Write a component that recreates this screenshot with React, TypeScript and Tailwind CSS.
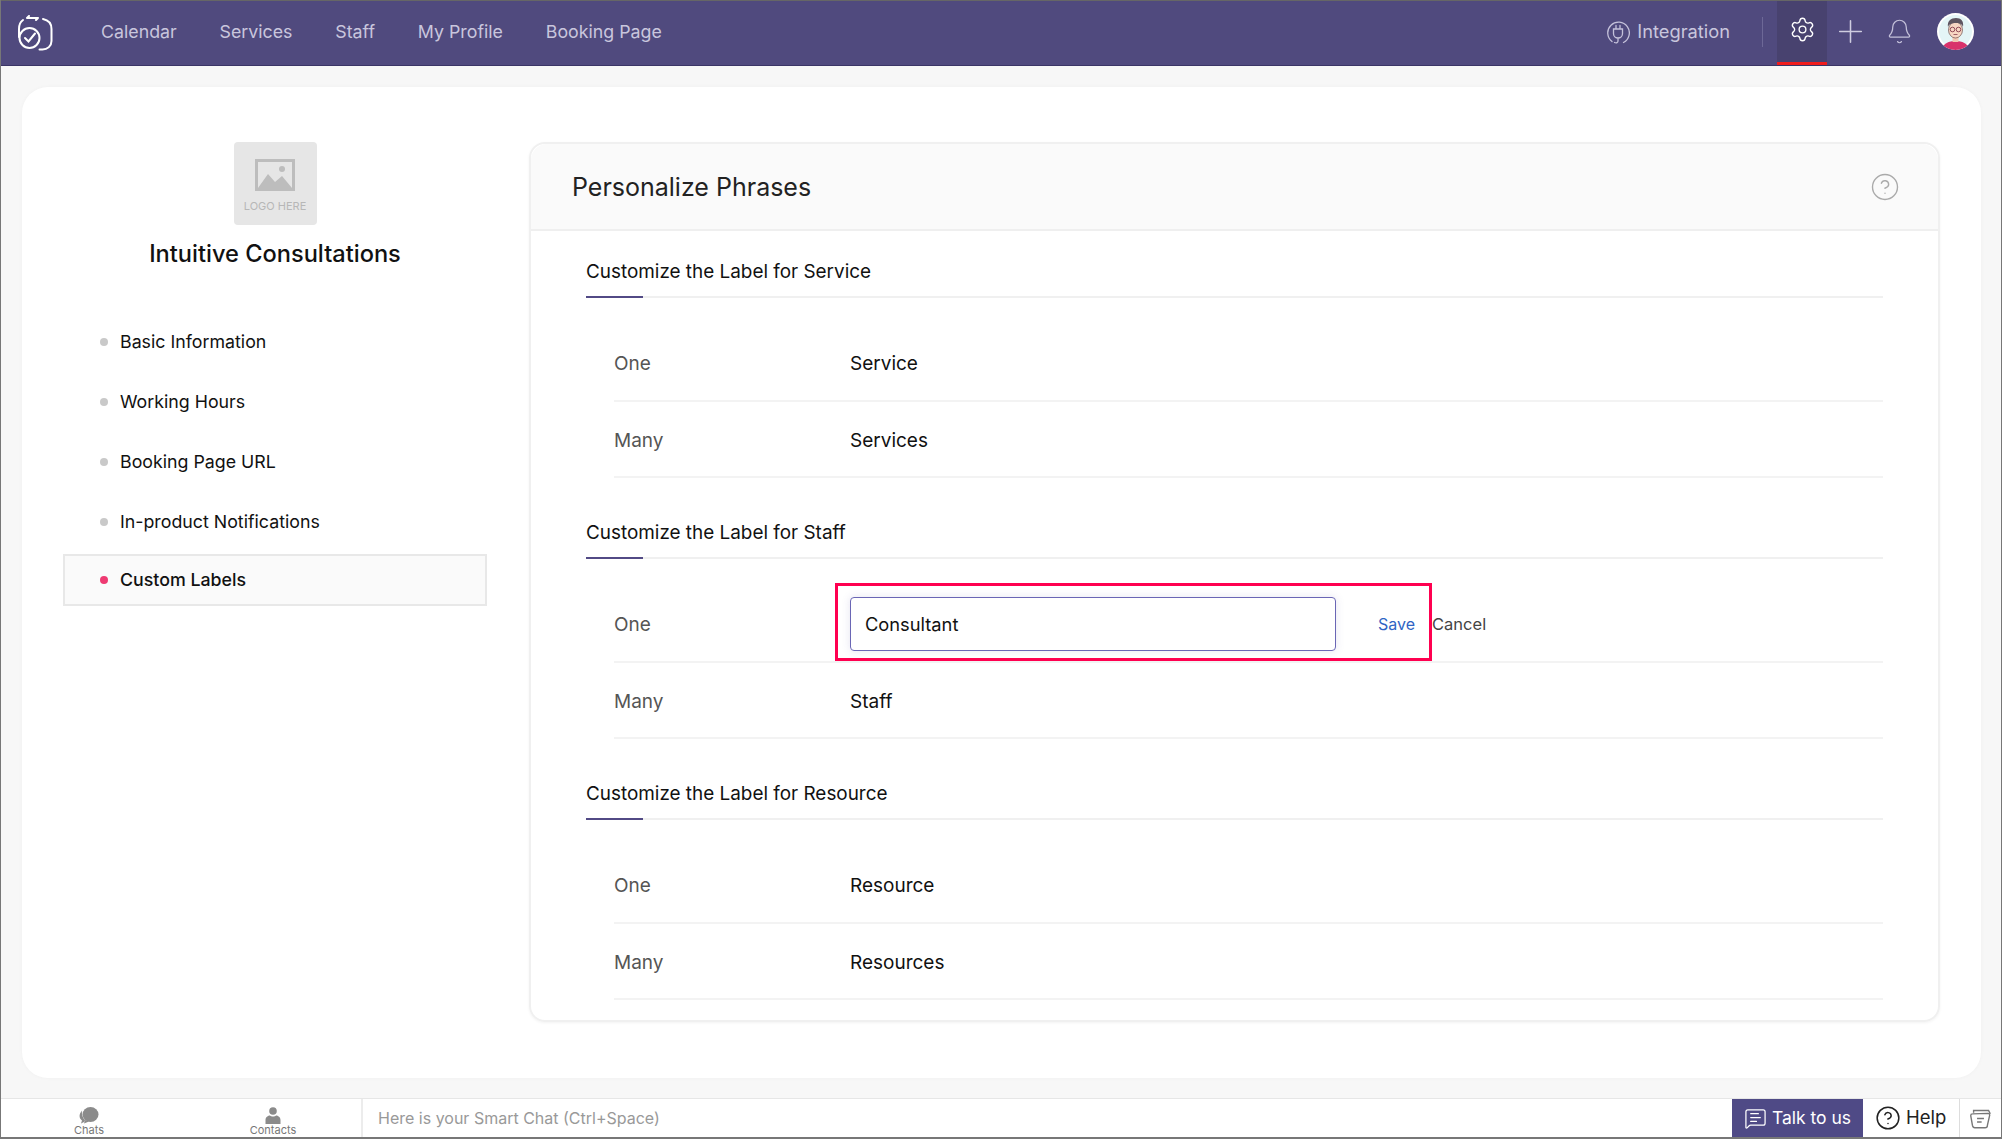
import { Bell, CircleHelp, MessageSquareText, Plus, Settings } from 'lucide-react';

const navItems = ['Calendar', 'Services', 'Staff', 'My Profile', 'Booking Page'];
const sideItems = ['Basic Information', 'Working Hours', 'Booking Page URL', 'In-product Notifications'];

function Logo() {
  return (
    <svg width="36" height="36" viewBox="0 0 36 36" fill="none" stroke="white" strokeWidth="2" strokeLinecap="round">
      <path d="M10 3h11M10 3l2-2M21 3l-2 2" />
      <path d="M6 5C3 7 2 10 2 14v8" />
      <circle cx="12.500" cy="23" r="10" />
      <path d="M8 23l3.500 3.500 6.500-8" />
      <path d="M26 4c5 1 8.500 4 8.500 10v12c0 5-4 8.500-9 8.500h-3" />
    </svg>
  );
}

function Plug() {
  return (
    <svg width="24" height="24" viewBox="0 0 24 24" fill="none" stroke="#c4c1da" strokeWidth="1.300" strokeLinecap="round" className="-mt-[1px]">
      <path d="M6 20.500A10.800 10.800 0 1 1 17.500 21.500" />
      <path d="M7.500 8v4.500a4.500 4.500 0 0 0 9 0V8zM10 4.500V8M14 4.500V8M12 17v3c0 1.500-1.500 2.500-3.500 1.500" />
    </svg>
  );
}

function Avatar() {
  return (
    <svg width="37" height="37" viewBox="0 0 37 37">
      <defs>
        <clipPath id="avatar-clip"><circle cx="18.500" cy="18.500" r="18.500" /></clipPath>
      </defs>
      <g clipPath="url(#avatar-clip)">
        <rect width="37" height="37" fill="white" />
        <circle cx="18.500" cy="18.500" r="16.500" fill="#e4f5f6" />
        <path d="M5 37c1-7 7-9 13.500-9s12.500 2 13.500 9z" fill="#d8326b" />
        <rect x="15.500" y="22" width="6" height="7" fill="#f2c9b4" />
        <ellipse cx="18.500" cy="17" rx="7" ry="8" fill="#f7d6c3" stroke="#5b3a3a" strokeWidth="0.600" />
        <path d="M11 14c-1-6 3-9 8-9s8 3 7 9c-1-3-3-4-7-4s-7 1-8 4z" fill="#5f5560" />
        <circle cx="15.500" cy="16.500" r="2.300" fill="none" stroke="#7a2b3d" strokeWidth="0.800" />
        <circle cx="21.500" cy="16.500" r="2.300" fill="none" stroke="#7a2b3d" strokeWidth="0.800" />
        <path d="M16.500 21.500h4" stroke="#7a2b3d" strokeWidth="0.700" />
      </g>
    </svg>
  );
}

function SectionHead({ title }: { title: string }) {
  return (
    <div className="flex h-[66px] flex-col justify-end border-b-2 border-[#f0f0f0]">
      <h3 className="mb-[12.500px] text-[18.900px] leading-6 text-[#111]">{title}</h3>
      <div className="-mb-[2px] h-[2px] w-[57px] bg-[#524a85]" />
    </div>
  );
}

function Row({ label, value }: { label: string; value: string }) {
  return (
    <div className="flex h-[76.500px] items-center border-b-2 border-[#f3f3f3] pt-[4px]">
      <span className="w-[236px] text-[19px] text-[#555]">{label}</span>
      <span className="text-[19px] text-[#111]">{value}</span>
    </div>
  );
}

export default function App() {
  return (
    <div className="relative flex h-[1139px] w-[2002px] flex-col overflow-hidden border-x border-[#777] bg-[#f7f7f7] font-['Inter','Liberation_Sans',sans-serif]">
      {/* top bar */}
      <header className="flex h-[66px] shrink-0 items-center border-y border-t-[#666] border-b-[#3b3566] bg-[#504a7e] pl-[16px] pr-[27px]">
        <Logo />
        <nav className="ml-[48px] -mt-[2px] flex gap-[42.800px] text-[17.800px] text-[#c9c6dd]">
          {navItems.map((item) => (
            <span key={item}>{item}</span>
          ))}
        </nav>
        <div className="ml-auto flex h-full items-center">
          <Plug />
          <span className="ml-[7px] -mt-[2px] text-[18.300px] text-[#c9c6dd]">Integration</span>
          <div className="ml-[32px] -mt-[2px] h-[30px] w-px bg-[#6d6897]" />
          <div className="ml-[14px] flex h-full w-[50px] items-center justify-center border-b-[3px] border-[#f01c1c] bg-[#48426f] pb-[4px]">
            <Settings size={27} strokeWidth={1.200} color="white" />
          </div>
          <Plus size={37} strokeWidth={1} color="#cfcde0" className="ml-[5px] -mt-[4px]" />
          <Bell size={27} strokeWidth={1.100} color="#c4c1da" className="ml-[17px] -mt-[4px]" />
          <div className="ml-[24px] -mt-[3px]">
            <Avatar />
          </div>
        </div>
      </header>

      {/* content */}
      <main className="flex-1 px-[21px] pt-[21px]">
        <div className="flex h-[991px] w-[1959px] rounded-[26px] bg-white pt-[55px] shadow-[0_0_4px_rgba(0,0,0,0.03)]">
          <aside className="ml-[41px] w-[424px]">
            <div className="flex flex-col items-center">
              <div className="flex h-[83px] w-[83px] flex-col items-center rounded-[4px] bg-[#e6e6e6] pt-[17px]">
                <svg width="40" height="32" viewBox="0 0 40 32">
                  <rect width="40" height="32" fill="#bdbdbd" />
                  <rect x="3" y="3" width="34" height="26" fill="#e6e6e6" />
                  <path d="M3 29l10-14 7 8 7-6 10 12z" fill="#bdbdbd" />
                  <circle cx="27" cy="10" r="3" fill="#bdbdbd" />
                </svg>
                <span className="mt-[9px] text-[11px] leading-3 whitespace-nowrap text-[#b7b7b7]">LOGO HERE</span>
              </div>
              <h2 className="mt-[13px] text-[23.600px] font-medium leading-8 text-[#111]">Intuitive Consultations</h2>
            </div>
            <ul className="mt-[42px] text-[17.800px] text-[#111]">
              {sideItems.map((item) => (
                <li key={item} className="flex h-[60px] items-center pl-[37px]">
                  <span className="mr-[12px] h-2 w-2 rounded-full bg-[#c9c9c9]" />
                  {item}
                </li>
              ))}
              <li className="mt-[1.500px] flex h-[52px] items-center border-2 border-[#e8e8e8] bg-[#fafafa] pl-[35px] pt-[1px] font-medium">
                <span className="mr-[12px] h-2 w-2 rounded-full bg-[#ee3a72]" />
                Custom Labels
              </li>
            </ul>
          </aside>

          <section className="ml-[42px] h-[880px] w-[1410.500px] rounded-[16px] border-2 border-[#f0f0f0] shadow-[0_1px_3px_rgba(0,0,0,0.05)]">
            <div className="flex h-[87px] items-center justify-between rounded-t-[16px] border-b-2 border-[#efefef] bg-[#fafafa] pl-[41px] pr-[38px]">
              <h1 className="text-[25px] leading-8 text-[#222]">Personalize Phrases</h1>
              <CircleHelp size={30} strokeWidth={1.100} color="#aaa" />
            </div>
            <div className="pl-[55px] pr-[55px]">
              <div className="h-[247px] pt-[1px]">
                <SectionHead title="Customize the Label for Service" />
                <div className="pl-[28px] pt-[27px]">
                  <Row label="One" value="Service" />
                  <Row label="Many" value="Services" />
                </div>
              </div>
              <div className="pt-[15px]">
                <SectionHead title="Customize the Label for Staff" />
                <div className="pl-[28px] pt-[27px]">
                  <div className="flex h-[76.500px] items-center border-b-2 border-[#f3f3f3] pt-[2px]">
                    <span className="w-[236px] pt-[2px] text-[19px] text-[#555]">One</span>
                    <input
                      readOnly
                      value="Consultant"
                      className="h-[54px] w-[486px] rounded-[4px] border border-[#6a66b5] pl-[14px] text-[18.300px] text-[#111] shadow-[0_0_8px_rgba(80,74,160,0.15)] outline-none"
                    />
                    <span className="ml-[42px] text-[16px] text-[#2f64c4]">Save</span>
                    <span className="ml-[17px] text-[16.500px] text-[#444]">Cancel</span>
                  </div>
                  <Row label="Many" value="Staff" />
                </div>
              </div>
              <div className="mt-[15px]">
                <SectionHead title="Customize the Label for Resource" />
                <div className="pl-[28px] pt-[27px]">
                  <Row label="One" value="Resource" />
                  <Row label="Many" value="Resources" />
                </div>
              </div>
            </div>
          </section>
        </div>
      </main>

      {/* highlight box around the edited field */}
      <div className="absolute left-[834px] top-[583px] h-[78px] w-[597px] border-[3.500px] border-[#ff0050]" />

      {/* bottom bar */}
      <footer className="flex h-[41px] shrink-0 items-stretch border-b-2 border-t border-b-[#777] border-t-[#e6e6e6] bg-white">
        <div className="flex w-[362px] border-r-2 border-[#ececec] text-[11px] leading-3 text-[#777]">
          <div className="ml-[66px] flex w-[44px] flex-col items-center pt-[8px]">
            <svg width="20" height="17" viewBox="0 0 20 17" fill="#8b8b8b">
              <ellipse cx="11.500" cy="7.500" rx="8" ry="7.500" />
              <path d="M6 13l-1 3.500 5-2zM3 3.500C0 7-.5 11 3 13.500l-1 3 3-1.500 1-2C3.500 11 2.500 7 3 3.500z" />
            </svg>
            <span>Chats</span>
          </div>
          <div className="ml-[137px] flex w-[50px] flex-col items-center pt-[8px]">
            <svg width="16" height="17" viewBox="0 0 16 17" fill="#8b8b8b">
              <circle cx="8" cy="4" r="3.800" />
              <path d="M.500 17v-4c0-3 2.500-4.500 4.500-4.500 1 1.300 5 1.300 6 0 2 0 4.500 1.500 4.500 4.500v4z" />
            </svg>
            <span>Contacts</span>
          </div>
        </div>
        <div className="flex flex-1 items-center pl-[15px] text-[16px] text-[#999]">Here is your Smart Chat (Ctrl+Space)</div>
        <div className="flex w-[131px] items-center justify-center gap-[5px] bg-[#4f4a86] text-[17.500px] text-white">
          <MessageSquareText size={23} strokeWidth={1.300} />
          Talk to us
        </div>
        <div className="flex w-[97px] items-center gap-[5px] border-r border-[#ddd] pl-[12px] text-[18.500px] text-[#222]">
          <CircleHelp size={26} strokeWidth={1.400} />
          Help
        </div>
        <div className="flex flex-1 grow-0 basis-[41px] items-center justify-center">
          <svg width="23" height="23" viewBox="0 0 20 20" fill="none" stroke="#777" strokeWidth="1.200">
            <path d="M3 6c-1 0-1.500.5-1.500 1.500L3 16c.2 1 1 2 2 2h9c1 0 2-1 2-2l2-9c0-1-.5-1.500-1.500-1.500z" />
            <path d="M4 5V3h13l1.500 3M7 10h6M7 13h4" />
          </svg>
        </div>
      </footer>
    </div>
  );
}
